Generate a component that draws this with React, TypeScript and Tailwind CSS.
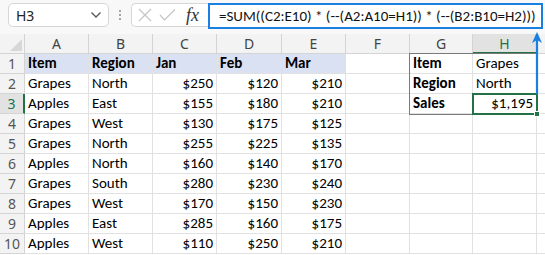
import React from "react";

const cols = ["A", "B", "C", "D", "E", "F", "G", "H"];
const widths = [64, 64, 64, 65, 64, 64, 63, 64];

type Row = string[];
const data: Row[] = [
  ["Item", "Region", "Jan", "Feb", "Mar", "", "Item", "Grapes"],
  ["Grapes", "North", "$250", "$120", "$210", "", "Region", "North"],
  ["Apples", "East", "$155", "$180", "$210", "", "Sales", "$1,195"],
  ["Grapes", "West", "$130", "$175", "$125", "", "", ""],
  ["Grapes", "North", "$255", "$225", "$135", "", "", ""],
  ["Apples", "North", "$160", "$140", "$170", "", "", ""],
  ["Grapes", "South", "$280", "$230", "$240", "", "", ""],
  ["Grapes", "West", "$170", "$150", "$230", "", "", ""],
  ["Apples", "East", "$285", "$160", "$175", "", "", ""],
  ["Apples", "West", "$110", "$250", "$210", "", "", ""],
];

const cellFont = { fontFamily: "Carlito, 'Open Sans', 'Liberation Sans', sans-serif" };

export default function App() {
  return (
    <div className="relative w-[545px] h-[255px] overflow-hidden bg-white" style={{ fontFamily: "'Noto Sans', 'Open Sans', sans-serif" }}>
      {/* formula bar */}
      <div className="flex items-start h-[34px] bg-[#f8f8f8] pt-[3px]">
        <div className="ml-[8px] w-[101px] h-[24px] bg-white border border-[#d6d6d6] rounded-[5px] flex items-center justify-between pl-[7px] pr-[6px]">
          <span className="text-[14px] text-[#222]">H3</span>
          <svg width="12" height="8" viewBox="0 0 12 8"><path d="M1.5 1.5 L6 6 L10.5 1.5" fill="none" stroke="#555" strokeWidth="1.3" /></svg>
        </div>
        <div className="w-[22px] h-[24px] flex flex-col items-center justify-center gap-[2px]">
          <span className="w-[2px] h-[2px] bg-[#888] rounded-full" />
          <span className="w-[2px] h-[2px] bg-[#888] rounded-full" />
          <span className="w-[2px] h-[2px] bg-[#888] rounded-full" />
        </div>
        <div className="w-[77px] h-[24px] bg-white border border-[#d6d6d6] border-r-0 rounded-l-[5px] flex items-center pl-[6px]">
          <svg width="14" height="14" viewBox="0 0 14 14"><path d="M1 1 L13 13 M13 1 L1 13" stroke="#c4c4c4" strokeWidth="1.2" /></svg>
          <svg className="ml-[7px]" width="17" height="14" viewBox="0 0 17 14"><path d="M1 7 L5.5 12 L16 1.5" fill="none" stroke="#c4c4c4" strokeWidth="1.2" /></svg>
          <span className="ml-[10px] text-[18px] italic text-[#333] leading-none" style={{ fontFamily: "'Liberation Serif', serif" }}>fx</span>
        </div>
        <div className="w-[335px] h-[26px] border-2 border-[#1a7fe0] bg-white flex items-center pl-[9px] text-[15px] text-[#111] whitespace-nowrap" style={cellFont}>
          =SUM((C2:E10) * (--(A2:A10=H1)) * (--(B2:B10=H2)))
        </div>
      </div>

      {/* header row */}
      <div className="flex h-[20px] bg-[#f3f3f3]">
        <div className="w-[25px] h-[20px] border-r border-b border-[#d4d4d4] relative">
          <svg className="absolute right-[2px] bottom-[2px]" width="12" height="12" viewBox="0 0 12 12"><path d="M12 0 L12 12 L0 12 Z" fill="#d7d7d7" /></svg>
        </div>
        {cols.map((c, i) => (
          <div
            key={c}
            className={
              c === "H"
                ? "h-[20px] flex items-center justify-center text-[14px] text-[#217346] bg-[#e2e2e2] border-r border-[#d4d4d4] border-b-2 border-b-[#217346]"
                : "h-[20px] flex items-center justify-center text-[14px] text-[#444] border-r border-b border-[#d4d4d4]"
            }
            style={{ width: widths[i] }}
          >
            {c}
          </div>
        ))}
        <div className="flex-1 border-b border-[#d4d4d4]" />
      </div>

      {/* rows */}
      {data.map((row, r) => (
        <div key={r} className="flex h-[20px]">
          <div
            className={
              r === 2
                ? "w-[25px] h-[20px] bg-[#e2e2e2] text-[#217346] text-[14px] flex items-center justify-center border-r-2 border-r-[#217346] border-b border-b-[#d4d4d4]"
                : "w-[25px] h-[20px] bg-[#f3f3f3] text-[#555] text-[14px] flex items-center justify-center border-r border-b border-[#d4d4d4]"
            }
          >
            {r + 1}
          </div>
          {row.map((v, i) => {
            const isHeader = r === 0 && i < 5;
            const bold = isHeader || (i === 6 && r < 3);
            const right = v.startsWith("$");
            return (
              <div
                key={i}
                className={[
                  "relative h-[20px] flex items-center border-r border-b border-[#e1e1e1] text-[15px] text-black whitespace-nowrap px-[3px]",
                  isHeader ? "bg-[#d9e1f2]" : "",
                  bold ? "font-bold" : "",
                  right ? "justify-end" : "justify-start",
                ].join(" ")}
                style={{ width: widths[i], ...cellFont }}
              >
                {v}
              </div>
            );
          })}
          <div className="flex-1 border-b border-[#e1e1e1]" />
        </div>
      ))}

      {/* G1:H3 border */}
      <div className="absolute left-[409px] top-[53px] w-[129px] h-[62px] border border-[#7a7a7a] pointer-events-none" />
      {/* H3 selection */}
      <div className="absolute left-[472px] top-[93px] w-[66px] h-[22px] border-2 border-[#217346] pointer-events-none" />
      <div className="absolute left-[534px] top-[111px] w-[6px] h-[6px] bg-[#217346] border border-white pointer-events-none" />

      {/* arrow */}
      <svg className="absolute left-[530px] top-[30px] pointer-events-none" width="14" height="66" viewBox="0 0 14 66">
        <path d="M7 4 L7 64" stroke="#1a7fe0" strokeWidth="2.2" />
        <path d="M7 2 L2 13 L7 10 L12 13 Z" fill="#1a7fe0" />
      </svg>
    </div>
  );
}
